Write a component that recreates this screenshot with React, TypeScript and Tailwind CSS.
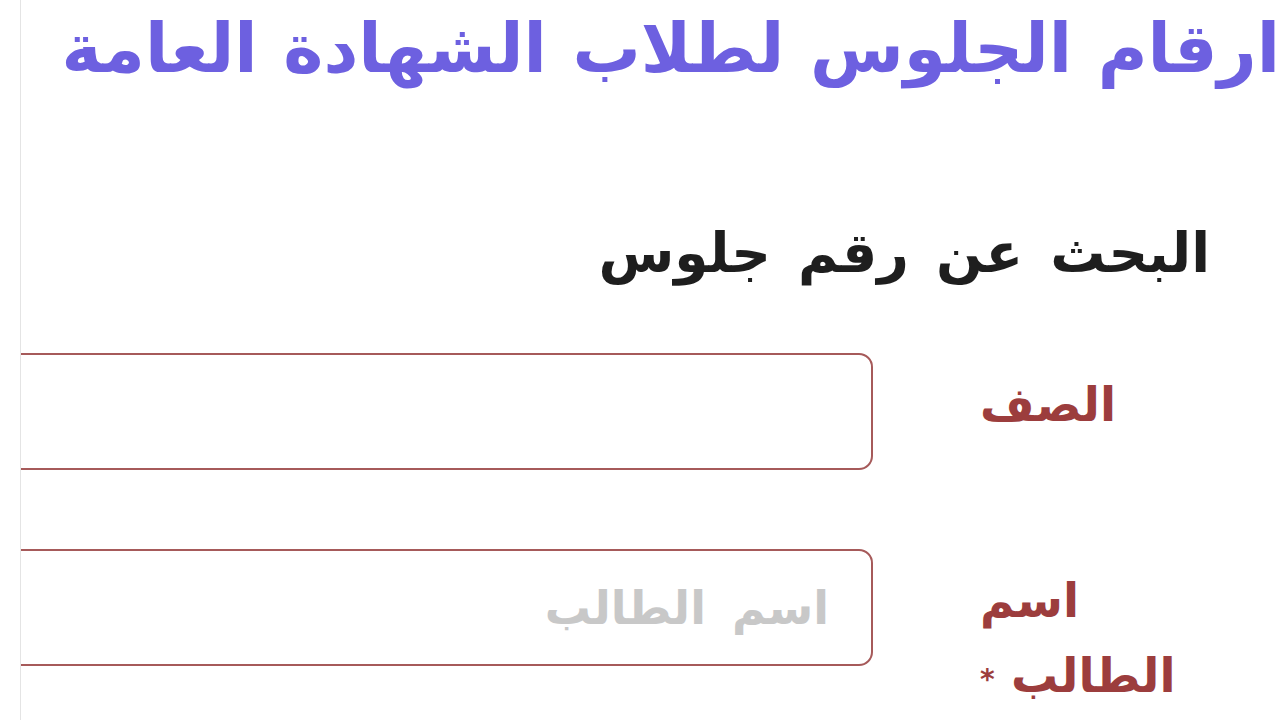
import React from 'react';

const fontStack = "font-['DejaVu_Sans',sans-serif]";

function Field({ label, placeholder }: { label: React.ReactNode; placeholder?: string }) {
  return (
    <div className="flex items-start gap-[107px] pr-[70px]">
      <label className="mt-[14px] w-[230px] shrink-0 text-left text-[47px] font-bold leading-[75px] text-[#9c3d3d]">
        {label}
      </label>
      <input
        type="text"
        placeholder={placeholder}
        className="h-[117px] w-[900px] shrink-0 rounded-[14px] border-2 border-[#a65a5a] bg-white pr-[42px] text-[46px] font-bold text-[#333] outline-none [word-spacing:10px] placeholder:text-[#c8c8c8]"
      />
    </div>
  );
}

export default function App() {
  return (
    <div dir="rtl" className={`h-[720px] w-full overflow-hidden bg-white ${fontStack}`}>
      <div className="ml-[20px] h-full overflow-hidden border-l border-[#e4e4e4]">
        {/* Page title */}
        <h1 className="whitespace-nowrap pt-[9px] text-[68px] font-bold leading-[80px] text-[#6d60e0] [word-spacing:2px]">
          ارقام الجلوس لطلاب الشهادة العامة
        </h1>

        {/* Search form */}
        <h2 className="mt-[133px] pr-[70px] text-[55px] font-bold leading-[62px] text-[#1e1e1e] [word-spacing:8px]">
          البحث عن رقم جلوس
        </h2>

        <form className="mt-[69px] flex flex-col gap-[79px]">
          <Field label="الصف" />
          <Field
            label={
              <>
                اسم
                <br />
                الطالب <span className="align-middle text-[28px]">*</span>
              </>
            }
            placeholder="اسم الطالب"
          />
        </form>
      </div>
    </div>
  );
}
